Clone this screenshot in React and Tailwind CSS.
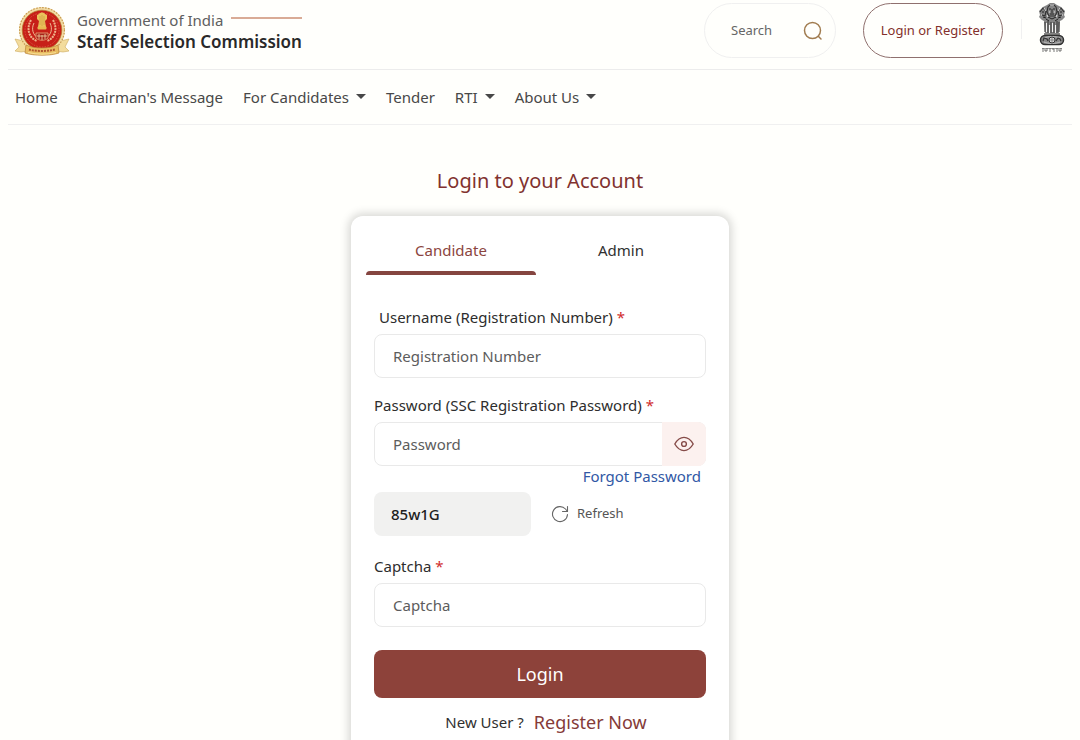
import React, { useState } from 'react';

const NAV_ITEMS = [
  { label: 'Home' },
  { label: "Chairman's Message" },
  { label: 'For Candidates', menu: true },
  { label: 'Tender' },
  { label: 'RTI', menu: true },
  { label: 'About Us', menu: true },
];

function CommissionLogo() {
  return (
    <svg viewBox="0 0 56 50" className="h-[50px] w-14 shrink-0" aria-hidden="true">
      <path d="M1 33l9 2 4 10-7 1-6-1 4-4-4-8z" fill="#f3dc9c" stroke="#cda95a" strokeWidth=".6" />
      <path d="M55 33l-9 2-4 10 7 1 6-1-4-4 4-8z" fill="#f3dc9c" stroke="#cda95a" strokeWidth=".6" />
      <circle cx="28" cy="24" r="23" fill="#f2dba4" />
      <circle cx="28" cy="24" r="22.4" fill="none" stroke="#c79a50" strokeWidth="1.2" strokeDasharray="1.6 1.4" />
      <circle cx="28" cy="24" r="19.8" fill="#c71f18" stroke="#b5762a" strokeWidth=".7" />
      <circle cx="28" cy="24" r="17" fill="none" stroke="#d9553f" strokeWidth="1" strokeDasharray="1.5 1.3" />
      <path d="M17 14c-5 9-2 18 6 21M39 14c5 9 2 18-6 21" fill="none" stroke="#efb28a" strokeWidth="2" strokeDasharray="2 .8" />
      <path d="M20 17c-3 6-1 12 4 15M36 17c3 6 1 12-4 15" fill="none" stroke="#f7dcae" strokeWidth=".8" />
      <path d="M25 8c1-2 5-2 6 0l2 1v4l-2 2 1 6h-8l1-6-2-2V9z" fill="#eac45c" />
      <path d="M26 10v9M28 9v11M30 10v9" stroke="#c28d34" strokeWidth=".5" />
      <rect x="23.5" y="20.5" width="9" height="3" rx="1" fill="#e7ba52" />
      <path d="M22 27h12v5c-3 3-9 3-12 0z" fill="#a8211a" stroke="#e7ad7c" strokeWidth=".8" />
      <path d="M25 28v5M28 29v5M31 28v5M23 30h10" stroke="#f3d7a4" strokeWidth=".8" />
      <path d="M12 39c8 4 24 4 32 0l1 8c-9 3-25 3-34 0z" fill="#e8bd61" stroke="#b98138" strokeWidth=".7" />
      <path d="M15 43.500c8 2 18 2 26 0" fill="none" stroke="#b0562c" strokeWidth="2" strokeDasharray="2 1" />
      <path d="M14 46.500c9 2 19 2 28 0" fill="none" stroke="#f7de94" strokeWidth="1.2" />
    </svg>
  );
}

function StateEmblem() {
  return (
    <svg viewBox="0 0 28 50" className="h-[50px] w-7 shrink-0" fill="none" aria-hidden="true">
      <path d="M9 2l3-2h4l3 2 4 2 4 4-1 4 1 2-3 3-2 1-1 12H7L6 18l-2-1-3-3 1-2-1-4 4-4z" fill="#858585" />
      <path d="M10 4c2-3 6-3 8 0l1 5-2 4h-6L9 9zM2 9l3-4 3 3-1 5-3-1M26 9l-3-4-3 3 1 5 3-1" stroke="#303030" strokeWidth="1.1" />
      <path d="M11 6h2M15 6h2M14 6v4M12 11h4M4 9h2M22 9h2M5 14l3 1M23 14l-3 1M10 14l4 2 4-2M8 16l3 2M20 16l-3 2" stroke="#222" strokeWidth="1" />
      <path d="M12 2h4M6 5l2 3M22 5l-2 3M11 9h1M16 9h1M3 12h1M24 12h1M9 12l1 2M19 12l-1 2" stroke="#eee" strokeWidth=".9" />
      <path d="M8.500 20v9M11.500 22v8M14.500 20v9M17.500 22v8" stroke="#f4f4f4" strokeWidth="1.300" />
      <path d="M7 19v10M10 18v12M13 19v11M16 19v11M19 18v12M21 19v10" stroke="#333" strokeWidth="1" />
      <path d="M6 31h16" stroke="#444" strokeWidth="1.3" />
      <rect x="2.500" y="32.500" width="23" height="9" rx="4.500" fill="#888" stroke="#303030" strokeWidth="1.500" />
      <path d="M6 35c4-2 12-2 16 0M6 39c4 2 12 2 16 0" stroke="#ccc" strokeWidth=".8" />
      <circle cx="14" cy="37" r="3" fill="#ddd" stroke="#333" />
      <path d="M14 34.500v5M11.500 37h5" stroke="#555" strokeWidth=".6" />
      <path d="M5 38l1-3 3 1 1 2M18 38l2-3 2 1 1 2" stroke="#333" strokeWidth="1.200" />
      <path d="M4 45.500h20" stroke="#777" strokeWidth=".7" />
      <path d="M5 45v4M7 46v2h2v-3M12 45v4M14 46h2v3M19 45v4M21 46v2h2v-3" stroke="#555" strokeWidth=".8" />
    </svg>
  );
}

function SearchIcon() {
  return (
    <svg viewBox="0 0 20 20" className="size-5" fill="none" stroke="#a17c50" strokeWidth="1.5" strokeLinecap="round" aria-hidden="true">
      <circle cx="9.500" cy="9.500" r="8" />
      <path d="M15.300 15.300l2.700 2.700" />
    </svg>
  );
}

function EyeIcon() {
  return (
    <svg viewBox="0 0 20 16" className="h-4 w-5" fill="none" stroke="#854b48" strokeWidth="1.400" strokeLinejoin="round" aria-hidden="true">
      <path d="M.8 8C3.300 3.700 6.300 1.400 10 1.400S16.700 3.700 19.200 8c-2.500 4.300-5.500 6.600-9.200 6.600S3.300 12.300.8 8z" />
      <circle cx="10" cy="8" r="2.400" />
    </svg>
  );
}

function RefreshIcon() {
  return (
    <svg viewBox="0 0 18 18" className="size-[18px]" fill="none" stroke="#666" strokeWidth="1.100" strokeLinecap="round" strokeLinejoin="round" aria-hidden="true">
      <path d="M16.500 9.500A7.500 7.500 0 1 1 14.500 4l2 2.500" />
      <path d="M16.500 1.500v5h-5" />
    </svg>
  );
}

function FieldLabel({ id, className = '', children }) {
  return (
    <label htmlFor={id} className={`block leading-6 text-[#2d2d2d] ${className}`}>
      {children} <span className="text-[#d02b2b]">*</span>
    </label>
  );
}

const inputClass = 'block h-11 w-full rounded-lg border border-[#e9e9e9] bg-white px-[18px] outline-none placeholder:text-[#5c5c5c] focus:border-[#8c4039]';

function Header() {
  return (
    <header className="mx-2">
      <div className="flex h-[70px] items-start justify-between border-b border-[#ececec] px-1.5">
        <a href="#home" className="flex gap-[7px] pt-1.5">
          <CommissionLogo />
          <div className="pt-1">
            <div className="flex items-center gap-2 text-[15px] leading-5 text-[#606060]">
              Government of India
              <span className="mb-1 h-0.5 flex-1 bg-[#d9ab96]" />
            </div>
            <div className="text-[17px] font-semibold leading-6 text-[#292929]">Staff Selection Commission</div>
          </div>
        </a>

        <div className="flex items-start pt-[3px]">
          <form className="flex h-[55px] w-[132px] items-center justify-between rounded-full border border-[#f0f0f0] pl-[26px] pr-3" onSubmit={(e) => e.preventDefault()}>
            <input aria-label="Search" placeholder="Search" className="w-14 bg-transparent text-[13px] outline-none placeholder:text-[#666]" />
            <button aria-label="Submit search"><SearchIcon /></button>
          </form>
          <button className="ml-[27px] h-[55px] w-[140px] rounded-full border border-[#8f706e] text-[13px] text-[#83302c]">
            Login or Register
          </button>
          <span className="ml-[18px] mr-4 mt-4 h-5 w-px bg-[#f0f0f0]" />
          <StateEmblem />
        </div>
      </div>

      <nav className="flex h-[55px] items-center border-b border-[#f0f0f0] px-[7px] text-[15px] text-[#484848]">
        <ul className="flex items-center gap-5">
          {NAV_ITEMS.map((item) => (
            <li key={item.label}>
              <a href="#menu" className="flex items-center gap-[7px]">
                {item.label}
                {item.menu && <span className="mb-0.5 border-x-[5px] border-t-[5px] border-x-transparent border-t-[#484848]" />}
              </a>
            </li>
          ))}
        </ul>
      </nav>
    </header>
  );
}

function LoginCard() {
  const [tab, setTab] = useState('Candidate');
  const [visible, setVisible] = useState(false);

  return (
    <section className="w-[378px] max-w-full rounded-t-xl bg-white pb-10 pl-[15px] pr-[23px] pt-[22px] shadow-[0_0_8px_3px_rgba(0,0,0,0.15)]">
      <div role="tablist" className="flex">
        {['Candidate', 'Admin'].map((name) => (
          <button
            key={name}
            role="tab"
            aria-selected={tab === name}
            onClick={() => setTab(name)}
            className={`relative flex-1 pb-[13px] leading-6 ${tab === name ? 'text-[#8b4540]' : 'text-[#303030]'}`}
          >
            {name}
            {tab === name && <span className="absolute inset-x-0 bottom-0 h-1 rounded-t bg-[#854540]" />}
          </button>
        ))}
      </div>

      <form className="ml-2 mt-[30px]" onSubmit={(e) => e.preventDefault()}>
        <FieldLabel id="username" className="pl-[5px]">Username (Registration Number)</FieldLabel>
        <input id="username" placeholder="Registration Number" className={`mt-[5px] ${inputClass}`} />

        <FieldLabel id="password" className="mt-[15px]">Password (SSC Registration Password)</FieldLabel>
        <div className="relative mt-[5px]">
          <input id="password" type={visible ? 'text' : 'password'} placeholder="Password" className={inputClass} />
          <button
            type="button"
            aria-label="Show password"
            onClick={() => setVisible(!visible)}
            className="absolute inset-y-0 right-0 flex w-11 items-center justify-center rounded-r-lg bg-[#fcf1ef]"
          >
            <EyeIcon />
          </button>
        </div>

        <div className="pr-[5px] text-right leading-5">
          <a href="#forgot" className="text-[#3158a5]">Forgot Password</a>
        </div>

        <div className="mt-1.5 flex items-center gap-5">
          <div className="flex h-11 w-[157px] items-center rounded-lg bg-[#f1f1f0] px-[17px] font-medium text-[#202020]">85w1G</div>
          <button type="button" className="flex items-center gap-2 text-[13px] text-[#555]">
            <RefreshIcon />
            Refresh
          </button>
        </div>

        <FieldLabel id="captcha" className="mt-[18px]">Captcha</FieldLabel>
        <input id="captcha" placeholder="Captcha" className={`mt-[5px] ${inputClass}`} />

        <button className="mt-[23px] h-12 w-full rounded-lg bg-[#8d423a] text-lg text-white">Login</button>

        <p className="mt-3 flex items-center justify-center gap-2.5 pl-3 leading-6 text-[#303030]">
          New User ?
          <a href="#register" className="text-lg leading-6 text-[#853b38]">Register Now</a>
        </p>
      </form>
    </section>
  );
}

export default function App() {
  return (
    <div className="min-h-screen bg-[#fffffc] font-['Noto_Sans',sans-serif] text-[15px]">
      <Header />
      <main className="flex flex-col items-center px-4">
        <h1 className="mb-[21px] mt-[42px] text-xl leading-7 text-[#81322f]">Login to your Account</h1>
        <LoginCard />
      </main>
    </div>
  );
}
